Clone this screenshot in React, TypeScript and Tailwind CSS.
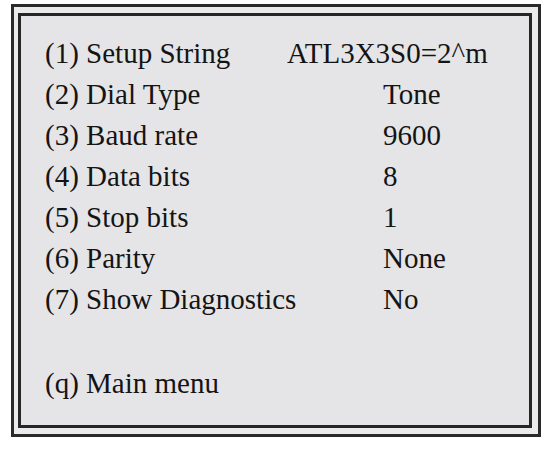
import React from "react";

type Setting = { key: string; label: string; value: string };

// Modem configuration menu entries
const settings: Setting[] = [
  { key: "1", label: "Setup String", value: "ATL3X3S0=2^m" },
  { key: "2", label: "Dial Type", value: "Tone" },
  { key: "3", label: "Baud rate", value: "9600" },
  { key: "4", label: "Data bits", value: "8" },
  { key: "5", label: "Stop bits", value: "1" },
  { key: "6", label: "Parity", value: "None" },
  { key: "7", label: "Show Diagnostics", value: "No" },
];

export default function App() {
  return (
    <div className="w-[549px] h-[453px] bg-white pt-[4px] pl-[11px]">
      {/* outer frame */}
      <div className="w-[530px] h-[433px] border-[3px] border-[#2a2a2a] bg-[#ebebec] pt-[6px] pl-[4px]">
        {/* inner frame */}
        <div
          className="w-[514px] h-[415px] border-[3px] border-[#262626] bg-[#e5e5e7] pt-[17px] pl-[24px] text-[29px] leading-[41px] text-[#141414]"
          style={{ fontFamily: '"Liberation Serif", "Times New Roman", serif' }}
        >
          {settings.map((s, i) => (
            <div key={s.key} className="flex whitespace-nowrap">
              <span className={i === 0 ? "w-[242px]" : "w-[338px]"}>
                ({s.key}) {s.label}
              </span>
              <span>{s.value}</span>
            </div>
          ))}
          <div className="h-[41px]" />
          <div className="mt-[2px] whitespace-nowrap">(q) Main menu</div>
        </div>
      </div>
    </div>
  );
}
